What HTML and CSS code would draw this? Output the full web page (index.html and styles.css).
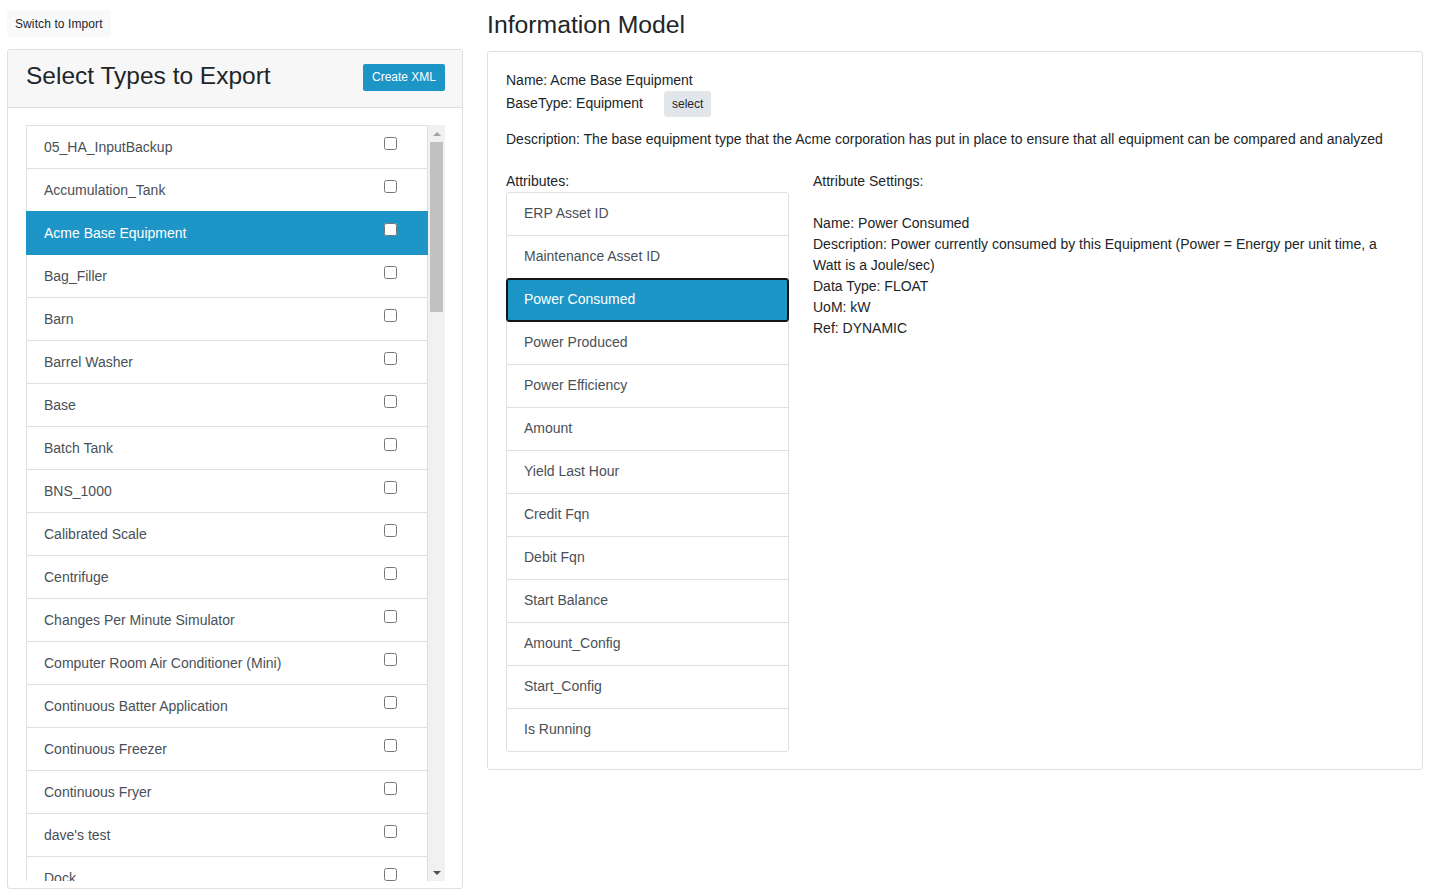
FILE: index.html
```html
<!DOCTYPE html>
<html lang="en">
<head>
<meta charset="utf-8">
<title>Export Types</title>
<link rel="stylesheet" href="styles.css">
</head>
<body>
<div class="page">
  <div class="left-col">
    <button class="btn-light">Switch to Import</button>
    <div class="card export-card">
      <div class="card-header">
        <h2 class="export-title">Select Types to Export</h2>
        <button class="btn-primary">Create XML</button>
      </div>
      <div class="export-body">
        <div class="scroll-box">
          <div class="type-list">
            <div class="type-item"><span>05_HA_InputBackup</span><input type="checkbox"></div>
            <div class="type-item"><span>Accumulation_Tank</span><input type="checkbox"></div>
            <div class="type-item active"><span>Acme Base Equipment</span><input type="checkbox"></div>
            <div class="type-item"><span>Bag_Filler</span><input type="checkbox"></div>
            <div class="type-item"><span>Barn</span><input type="checkbox"></div>
            <div class="type-item"><span>Barrel Washer</span><input type="checkbox"></div>
            <div class="type-item"><span>Base</span><input type="checkbox"></div>
            <div class="type-item"><span>Batch Tank</span><input type="checkbox"></div>
            <div class="type-item"><span>BNS_1000</span><input type="checkbox"></div>
            <div class="type-item"><span>Calibrated Scale</span><input type="checkbox"></div>
            <div class="type-item"><span>Centrifuge</span><input type="checkbox"></div>
            <div class="type-item"><span>Changes Per Minute Simulator</span><input type="checkbox"></div>
            <div class="type-item"><span>Computer Room Air Conditioner (Mini)</span><input type="checkbox"></div>
            <div class="type-item"><span>Continuous Batter Application</span><input type="checkbox"></div>
            <div class="type-item"><span>Continuous Freezer</span><input type="checkbox"></div>
            <div class="type-item"><span>Continuous Fryer</span><input type="checkbox"></div>
            <div class="type-item"><span>dave's test</span><input type="checkbox"></div>
            <div class="type-item"><span>Dock</span><input type="checkbox"></div>
          </div>
          <div class="scrollbar">
            <div class="sb-btn"><span class="arrow-up"></span></div>
            <div class="sb-track"><div class="sb-thumb"></div></div>
            <div class="sb-btn"><span class="arrow-down"></span></div>
          </div>
        </div>
      </div>
    </div>
  </div>

  <div class="right-col">
    <h1 class="model-title">Information Model</h1>
    <div class="card model-card">
      <div class="line">Name: Acme Base Equipment</div>
      <div class="basetype-row">
        <span class="basetype-text">BaseType: Equipment</span>
        <button class="btn-select">select</button>
      </div>
      <div class="line desc">Description: The base equipment type that the Acme corporation has put in place to ensure that all equipment can be compared and analyzed</div>
      <div class="attrs-row">
        <div class="attrs-col">
          <div class="line">Attributes:</div>
          <div class="attr-list">
            <div class="attr-item">ERP Asset ID</div>
            <div class="attr-item">Maintenance Asset ID</div>
            <div class="attr-item active">Power Consumed</div>
            <div class="attr-item">Power Produced</div>
            <div class="attr-item">Power Efficiency</div>
            <div class="attr-item">Amount</div>
            <div class="attr-item">Yield Last Hour</div>
            <div class="attr-item">Credit Fqn</div>
            <div class="attr-item">Debit Fqn</div>
            <div class="attr-item">Start Balance</div>
            <div class="attr-item">Amount_Config</div>
            <div class="attr-item">Start_Config</div>
            <div class="attr-item">Is Running</div>
          </div>
        </div>
        <div class="settings-col">
          <div class="line">Attribute Settings:</div>
          <div class="line blank"></div>
          <div class="line">Name: Power Consumed</div>
          <div class="line">Description: Power currently consumed by this Equipment (Power = Energy per unit time, a Watt is a Joule/sec)</div>
          <div class="line">Data Type: FLOAT</div>
          <div class="line">UoM: kW</div>
          <div class="line">Ref: DYNAMIC</div>
        </div>
      </div>
    </div>
  </div>
</div>
</body>
</html>
```

FILE: styles.css
```css
* {
  box-sizing: border-box;
}

html, body {
  margin: 0;
  padding: 0;
  background: #ffffff;
}

body {
  font-family: "Liberation Sans", Arial, sans-serif;
  font-size: 14px;
  color: #212529;
  overflow: hidden;
}

button {
  font-family: "Liberation Sans", Arial, sans-serif;
  border: 0;
  cursor: pointer;
}

.page {
  display: flex;
  gap: 24px;
  padding-left: 7px;
}

/* ---------- left column ---------- */
.left-col {
  width: 456px;
  flex: none;
  padding-top: 10px;
}

.btn-light {
  display: block;
  height: 27px;
  padding: 1px 8px 0 8px;
  font-size: 12px;
  line-height: 26px;
  color: #212529;
  background: #f8f9fa;
  border-radius: 3px;
  letter-spacing: 0.1px;
}

.card {
  border: 1px solid #dfdfdf;
  border-radius: 3px;
  background: #fff;
}

.export-card {
  margin-top: 12px;
  height: 840px;
  display: flex;
  flex-direction: column;
}

.card-header {
  height: 58px;
  background: #f7f7f7;
  border-bottom: 1px solid #dfdfdf;
  display: flex;
  align-items: flex-start;
  justify-content: space-between;
  padding: 0 17px 0 18px;
}

.export-title {
  margin: 11px 0 0 0;
  font-size: 24.5px;
  font-weight: normal;
  line-height: 29px;
  color: #212529;
}

.btn-primary {
  margin-top: 14px;
  height: 27px;
  padding: 0 9px;
  font-size: 12px;
  line-height: 27px;
  color: #ffffff;
  background: #1d95c6;
  border-radius: 2px;
}

.export-body {
  padding: 17px 17px 7px 18px;
}

.scroll-box {
  height: 756px;
  display: flex;
  overflow: hidden;
}

.type-list {
  flex: 1;
  overflow: hidden;
}

.type-item {
  position: relative;
  display: flex;
  justify-content: space-between;
  align-items: flex-start;
  padding: 12px 17px;
  line-height: 18px;
  color: #495057;
  background: #fff;
  border: 1px solid #dfdfdf;
  margin-bottom: -1px;
}

.type-item input {
  width: 13px;
  height: 13px;
  margin: -1px 13px 0 0;
  flex: none;
}

.type-item.active {
  z-index: 2;
  color: #ffffff;
  background: #1d95c6;
  border-color: #1d95c6;
}

.scrollbar {
  width: 17px;
  flex: none;
  background: #f1f1f1;
  display: flex;
  flex-direction: column;
}

.sb-btn {
  height: 17px;
  display: flex;
  align-items: center;
  justify-content: center;
  flex: none;
}

.arrow-up {
  width: 0;
  height: 0;
  border-left: 4px solid transparent;
  border-right: 4px solid transparent;
  border-bottom: 4px solid #a3a3a3;
}

.arrow-down {
  width: 0;
  height: 0;
  border-left: 4px solid transparent;
  border-right: 4px solid transparent;
  border-top: 4px solid #505050;
}

.sb-track {
  flex: 1;
  padding: 0 2px;
}

.sb-thumb {
  height: 170px;
  background: #c1c1c1;
}

/* ---------- right column ---------- */
.right-col {
  width: 936px;
  flex: none;
  padding-top: 9px;
}

.model-title {
  margin: 0 0 11px 0;
  font-size: 24.75px;
  line-height: 31px;
  font-weight: normal;
  color: #212529;
}

.model-card {
  padding: 18px 18px 17px 18px;
}

.line {
  line-height: 21px;
}

.blank {
  height: 21px;
}

.basetype-row {
  display: flex;
  align-items: center;
  height: 26px;
}

.basetype-text {
  margin-top: -2px;
}

.btn-select {
  margin-left: 21px;
  height: 26px;
  padding: 0 8px;
  font-size: 12px;
  line-height: 26px;
  color: #212529;
  background: #e2e6ea;
  border-radius: 3px;
}

.desc {
  margin-top: 12px;
}

.attrs-row {
  margin-top: 21px;
  display: flex;
  gap: 24px;
  align-items: flex-start;
}

.attrs-col {
  width: 283px;
  flex: none;
}

.attr-list {
  margin-bottom: 1px;
}

.attr-item {
  position: relative;
  padding: 11px 17px 13px 17px;
  line-height: 18px;
  color: #495057;
  background: #fff;
  border: 1px solid #dfdfdf;
  margin-bottom: -1px;
}

.attr-item:first-child {
  border-top-left-radius: 3px;
  border-top-right-radius: 3px;
}

.attr-item:last-child {
  border-bottom-left-radius: 3px;
  border-bottom-right-radius: 3px;
}

.attr-item.active {
  z-index: 2;
  color: #ffffff;
  background: #1d95c6;
  border-color: #141414;
  box-shadow: inset 0 0 0 1px #141414;
  border-radius: 3px;
}

.settings-col {
  flex: 1;
}
```
